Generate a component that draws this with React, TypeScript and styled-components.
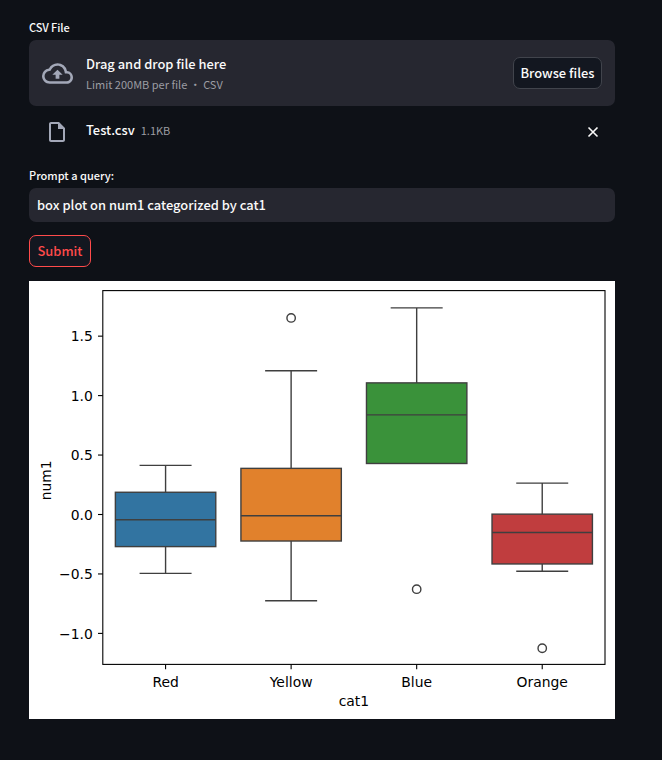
import React from "react";
import styled, { createGlobalStyle } from "styled-components";

const GlobalStyle = createGlobalStyle`
  * { box-sizing: border-box; }
  body {
    margin: 0;
    background: #0e1117;
    color: #fafafa;
    font-family: "Source Sans Pro", "Noto Sans CJK SC", sans-serif;
    font-weight: 400;
  }
  button, input { font: inherit; color: inherit; }
`;

const Page = styled.main`
  width: 662px;
  height: 760px;
  padding: 19px 47px 0 29px;
  display: flex;
  flex-direction: column;
  align-items: flex-start;
  overflow: hidden;
`;

const Label = styled.label<{ $gap: number; $spacing: string }>`
  font-size: 11px;
  font-weight: 500;
  line-height: 16px;
  height: 16px;
  margin-bottom: ${(p) => p.$gap}px;
  letter-spacing: ${(p) => p.$spacing};
  white-space: nowrap;
`;

const Dropzone = styled.section`
  width: 100%;
  height: 66px;
  border-radius: 7px;
  background: #262730;
  display: flex;
  align-items: center;
  padding: 0 13px;
`;

const CloudIcon = styled.svg`
  width: 31px;
  height: 31px;
  fill: #a3a8b8;
  margin-right: 13px;
`;

const Instructions = styled.div`
  flex: 1;
  display: flex;
  flex-direction: column;
  white-space: nowrap;
`;

const Primary = styled.span`
  font-size: 12.9px;
  font-weight: 500;
  line-height: 21px;
`;

const Hint = styled.span`
  font-size: 11px;
  line-height: 20px;
  color: #9c9da3;
`;

const Button = styled.button<{ $width: number; $accent?: boolean }>`
  width: ${(p) => p.$width}px;
  height: 32px;
  padding: 0;
  border: 1px solid ${(p) => (p.$accent ? "#ff4b4b" : "#41444c")};
  border-radius: 7px;
  background: #131720;
  color: ${(p) => (p.$accent ? "#ff4b4b" : "#fafafa")};
  font-size: 12.9px;
  font-weight: 500;
  line-height: 20px;
  white-space: nowrap;
`;

const FileRow = styled.div`
  width: 100%;
  height: 52px;
  margin-bottom: 9px;
  padding: 0 15px 0 16px;
  display: flex;
  align-items: center;
`;

const FileIcon = styled.svg`
  width: 24px;
  height: 24px;
  fill: #a3a8b8;
  margin-right: 17px;
`;

const FileName = styled.span`
  font-size: 12.9px;
  font-weight: 500;
  line-height: 20px;
  margin: 0 6px 4px 0;
`;

const FileSize = styled.span`
  flex: 1;
  font-size: 11px;
  line-height: 20px;
  margin-bottom: 4px;
  color: #9c9da3;
`;

const CloseIcon = styled.svg`
  width: 14px;
  height: 14px;
  stroke: #fafafa;
  stroke-width: 1.6;
`;

const QueryInput = styled.input`
  width: 100%;
  height: 34px;
  margin-bottom: 13px;
  padding: 0 8px 1px;
  border: 0;
  outline: 0;
  border-radius: 7px;
  background: #262730;
  font-size: 12.9px;
  font-weight: 500;
`;

const Figure = styled.svg`
  display: block;
  width: 586px;
  height: 438px;
  margin-top: 14px;
  background: #fff;
  font-family: "DejaVu Sans", sans-serif;
  font-size: 13.9px;
  fill: #000;
`;

interface Box {
  name: string;
  color: string;
  q1: number;
  median: number;
  q3: number;
  low: number;
  high: number;
  outlier?: number;
}

const boxes: Box[] = [
  { name: "Red", color: "#3274a1", q1: -0.27, median: -0.044, q3: 0.187, low: -0.495, high: 0.413 },
  { name: "Yellow", color: "#e1812c", q1: -0.223, median: -0.01, q3: 0.388, low: -0.725, high: 1.209, outlier: 1.653 },
  { name: "Blue", color: "#3a923a", q1: 0.429, median: 0.838, q3: 1.107, low: 0.429, high: 1.738, outlier: -0.628 },
  { name: "Orange", color: "#c03d3e", q1: -0.416, median: -0.151, q3: 0.003, low: -0.477, high: 0.264, outlier: -1.125 },
];

const ticks = [1.5, 1, 0.5, 0, -0.5, -1];
const axes = { left: 73.8, right: 576, top: 9.6, bottom: 383.4 };
const yOf = (v: number) => 233.5 - v * 118.9;
const xOf = (i: number) => axes.left + 125.55 * (i + 0.5);

function BoxPlot() {
  return (
    <Figure viewBox="0 0 586 438" role="img" aria-label="Box plot of num1 by cat1">
      {boxes.map((b, i) => {
        const x = xOf(i);
        return (
          <g key={b.name} stroke="#3f3f3f" strokeWidth="1.4" fill="none">
            <rect x={x - 50.2} y={yOf(b.q3)} width="100.4" height={yOf(b.q1) - yOf(b.q3)} fill={b.color} />
            <path
              d={`M${x} ${yOf(b.q3)}V${yOf(b.high)}M${x - 26} ${yOf(b.high)}h52M${x - 50.2} ${yOf(b.median)}h100.4`}
            />
            {b.low < b.q1 && <path d={`M${x} ${yOf(b.q1)}V${yOf(b.low)}M${x - 26} ${yOf(b.low)}h52`} />}
            {b.outlier !== undefined && <circle cx={x} cy={yOf(b.outlier)} r="4.2" />}
          </g>
        );
      })}
      <g stroke="#000" strokeWidth="1.1" fill="none">
        <rect x={axes.left} y={axes.top} width={axes.right - axes.left} height={axes.bottom - axes.top} />
        {ticks.map((t) => (
          <path key={t} d={`M${axes.left - 4.8} ${yOf(t)}h4.8`} />
        ))}
        {boxes.map((b, i) => (
          <path key={b.name} d={`M${xOf(i)} ${axes.bottom}v4.9`} />
        ))}
      </g>
      {ticks.map((t) => (
        <text key={t} x="63.8" y={yOf(t) + 5.3} textAnchor="end">
          {t.toFixed(1).replace("-", "\u2212")}
        </text>
      ))}
      {boxes.map((b, i) => (
        <text key={b.name} x={xOf(i)} y="405.6" textAnchor="middle">
          {b.name}
        </text>
      ))}
      <text x="324.9" y="425" textAnchor="middle">
        cat1
      </text>
      <text transform="translate(22 199.3) rotate(-90)" textAnchor="middle">
        num1
      </text>
    </Figure>
  );
}

export default function App() {
  return (
    <>
      <GlobalStyle />
      <Page>
        <Label $gap={5} $spacing="-0.1px">CSV File</Label>
        <Dropzone>
          <CloudIcon viewBox="0 0 24 24">
            <path d="M19.35 10.04A7.49 7.49 0 0 0 12 4C9.11 4 6.6 5.64 5.35 8.04A5.994 5.994 0 0 0 0 14c0 3.31 2.69 6 6 6h13c2.76 0 5-2.24 5-5 0-2.64-2.05-4.78-4.65-4.96zM19 18H6c-2.21 0-4-1.79-4-4 0-2.05 1.53-3.76 3.56-3.97l1.07-.11.5-.95A5.469 5.469 0 0 1 12 6c2.62 0 4.88 1.86 5.39 4.43l.3 1.5 1.53.11A2.98 2.98 0 0 1 22 15c0 1.65-1.35 3-3 3zM8 13h2.55v3h2.9v-3H16l-4-4z" />
          </CloudIcon>
          <Instructions>
            <Primary>Drag and drop file here</Primary>
            <Hint>Limit 200MB per file • CSV</Hint>
          </Instructions>
          <Button $width={89}>Browse files</Button>
        </Dropzone>
        <FileRow>
          <FileIcon viewBox="0 0 24 24">
            <path d="M14 2H6c-1.1 0-1.99.9-1.99 2L4 20c0 1.1.89 2 1.99 2H18c1.1 0 2-.9 2-2V8l-6-6zM6 20V4h7v5h5v11H6z" />
          </FileIcon>
          <FileName>Test.csv</FileName>
          <FileSize>1.1KB</FileSize>
          <CloseIcon viewBox="0 0 14 14">
            <path d="M2.5 2.5l9 9M11.5 2.5l-9 9" />
          </CloseIcon>
        </FileRow>
        <Label $gap={5} $spacing="0" htmlFor="query">Prompt a query:</Label>
        <QueryInput id="query" defaultValue="box plot on num1 categorized by cat1" />
        <Button $width={62} $accent>Submit</Button>
        <BoxPlot />
      </Page>
    </>
  );
}
